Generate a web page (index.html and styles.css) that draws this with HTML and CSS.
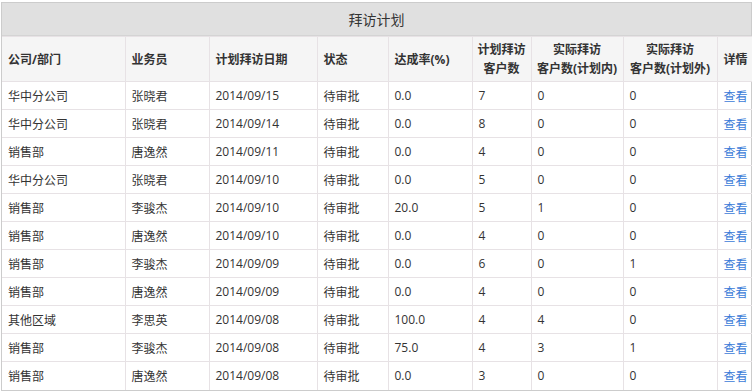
FILE: index.html
```html
<!DOCTYPE html>
<html lang="zh-CN">
<head>
    <meta charset="utf-8">
    <title>拜访计划</title>
    <link rel="stylesheet" href="styles.css">
</head>
<body>
    <div class="panel">
        <div class="panel-title">拜访计划</div>
        <table class="plan-table">
            <colgroup>
                <col class="c-dept">
                <col class="c-sales">
                <col class="c-date">
                <col class="c-status">
                <col class="c-rate">
                <col class="c-plan">
                <col class="c-in">
                <col class="c-out">
                <col class="c-detail">
            </colgroup>
            <thead>
                <tr>
                    <th>公司/部门</th>
                    <th>业务员</th>
                    <th>计划拜访日期</th>
                    <th>状态</th>
                    <th>达成率(%)</th>
                    <th class="center">计划拜访<br>客户数</th>
                    <th class="center">实际拜访<br>客户数(计划内)</th>
                    <th class="center">实际拜访<br>客户数(计划外)</th>
                    <th>详情</th>
                </tr>
            </thead>
            <tbody>
                <tr><td>华中分公司</td><td>张晓君</td><td>2014/09/15</td><td>待审批</td><td>0.0</td><td>7</td><td>0</td><td>0</td><td><a href="#">查看</a></td></tr>
                <tr><td>华中分公司</td><td>张晓君</td><td>2014/09/14</td><td>待审批</td><td>0.0</td><td>8</td><td>0</td><td>0</td><td><a href="#">查看</a></td></tr>
                <tr><td>销售部</td><td>唐逸然</td><td>2014/09/11</td><td>待审批</td><td>0.0</td><td>4</td><td>0</td><td>0</td><td><a href="#">查看</a></td></tr>
                <tr><td>华中分公司</td><td>张晓君</td><td>2014/09/10</td><td>待审批</td><td>0.0</td><td>5</td><td>0</td><td>0</td><td><a href="#">查看</a></td></tr>
                <tr><td>销售部</td><td>李骏杰</td><td>2014/09/10</td><td>待审批</td><td>20.0</td><td>5</td><td>1</td><td>0</td><td><a href="#">查看</a></td></tr>
                <tr><td>销售部</td><td>唐逸然</td><td>2014/09/10</td><td>待审批</td><td>0.0</td><td>4</td><td>0</td><td>0</td><td><a href="#">查看</a></td></tr>
                <tr><td>销售部</td><td>李骏杰</td><td>2014/09/09</td><td>待审批</td><td>0.0</td><td>6</td><td>0</td><td>1</td><td><a href="#">查看</a></td></tr>
                <tr><td>销售部</td><td>唐逸然</td><td>2014/09/09</td><td>待审批</td><td>0.0</td><td>4</td><td>0</td><td>0</td><td><a href="#">查看</a></td></tr>
                <tr><td>其他区域</td><td>李思英</td><td>2014/09/08</td><td>待审批</td><td>100.0</td><td>4</td><td>4</td><td>0</td><td><a href="#">查看</a></td></tr>
                <tr><td>销售部</td><td>李骏杰</td><td>2014/09/08</td><td>待审批</td><td>75.0</td><td>4</td><td>3</td><td>1</td><td><a href="#">查看</a></td></tr>
                <tr><td>销售部</td><td>唐逸然</td><td>2014/09/08</td><td>待审批</td><td>0.0</td><td>3</td><td>0</td><td>0</td><td><a href="#">查看</a></td></tr>
            </tbody>
        </table>
    </div>
</body>
</html>
```

FILE: styles.css
```css
* {
    box-sizing: border-box;
}

body {
    margin: 0;
    padding: 2px 2px 0 1px;
    background: #fff;
    color: #333;
    font-family: "Open Sans", "Noto Sans CJK SC", sans-serif;
    font-size: 12px;
}

.panel {
    border: 1px solid #ccc;
    background: #fff;
}

.panel-title {
    height: 33px;
    line-height: 33px;
    text-align: center;
    font-size: 14px;
    background: #e0e0e0;
    border-bottom: 1px solid #d4d4d4;
}

.plan-table {
    width: 100%;
    border-collapse: collapse;
    table-layout: fixed;
}

.c-dept { width: 123px; }
.c-sales { width: 84px; }
.c-date { width: 108px; }
.c-status { width: 71px; }
.c-rate { width: 84px; }
.c-plan { width: 59px; }
.c-in { width: 92px; }
.c-out { width: 94px; }
.c-detail { width: 35px; }

.plan-table th,
.plan-table td {
    border: 1px solid #e7e2e5;
    padding: 0 0 0 6px;
    text-align: left;
    white-space: nowrap;
    overflow: hidden;
}

.plan-table tr > :first-child {
    border-left: none;
}

.plan-table tr > :last-child {
    border-right: none;
}

.plan-table tbody tr:last-child td {
    border-bottom: none;
}

.plan-table th {
    height: 45px;
    background: #f5f5f5;
    font-weight: bold;
    line-height: 19px;
}

.plan-table th.center {
    text-align: center;
    padding: 0;
}

.plan-table td {
    height: 28px;
}

.plan-table a {
    color: #3b7bd8;
    text-decoration: none;
}
```
